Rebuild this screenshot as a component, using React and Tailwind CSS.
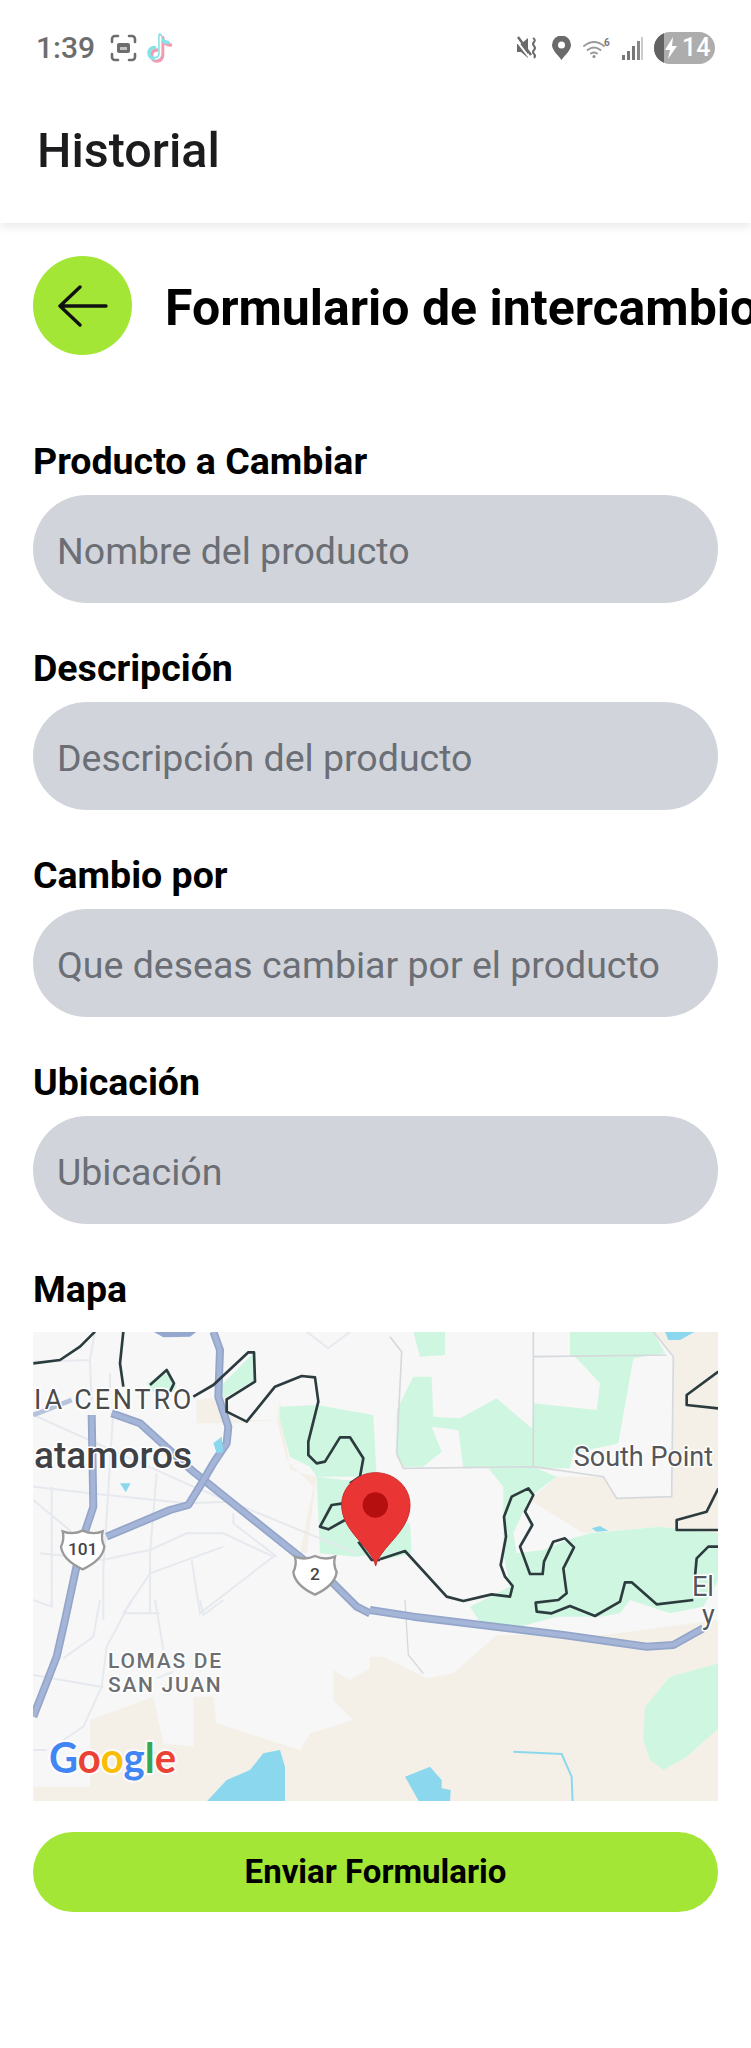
import React from "react";

const Z2 = "translate(0 1320) scale(0.33333)";
const Z3 = "translate(370 1320) scale(0.33333)";
const Z8 = "translate(0 1600) scale(0.33333)";
const Z9 = "translate(370 1600) scale(0.33333)";
const Z10 = "translate(300 1450) scale(0.33333)";

const LAND = "#f7f7f8", BEIGE = "#f4f0e8", GREEN = "#cff6e0", WATER = "#8bd8ee", MINOR = "#e6e9ee", GRAYR = "#d6d9dc", LINE = "#2c3c3e";

function Road({ d }) {
  return (
    <>
      <path d={d} fill="none" stroke="#93a5c8" strokeWidth="24" strokeLinejoin="round" />
      <path d={d} fill="none" stroke="#a4b5d8" strokeWidth="14" strokeLinejoin="round" />
    </>
  );
}

function Shield({ x, y, label, size = 42 }) {
  return (
    <g transform={`translate(${x} ${y})`}>
      <path d="M-60 -52 Q-30 -40 0 -54 Q30 -40 60 -52 Q54 -28 65 -6 Q60 34 0 62 Q-60 34 -65 -6 Q-54 -28 -60 -52Z" fill="#fff" stroke="#9a9a9a" strokeWidth="7" />
      <text x="0" y="18" textAnchor="middle" fontSize={size} fontFamily="Roboto, sans-serif" fontWeight="500" fill="#444">{label}</text>
    </g>
  );
}

function MapArt() {
  const halo = { paintOrder: "stroke", stroke: "#fff", strokeWidth: 3, strokeLinejoin: "round" };
  return (
    <svg viewBox="33 1332 685 469" className="block w-full h-full" style={{ fontFamily: "Roboto, sans-serif" }}>
      <rect x="33" y="1332" width="685" height="469" fill={LAND} />
      <g transform={Z8}>
        <path d="M270 360L460 290L490 430L580 440L580 290L640 290L650 370L900 450L930 400L1060 360L1000 300L1000 210L1050 240L1160 175L1160 610L100 610L100 560L270 560Z" fill={BEIGE} />
      </g>
      <g transform={Z9}>
        <path d="M0 170L40 170L170 235L250 220L380 105L700 105L1045 60L1045 610L0 610Z" fill={BEIGE} />
        <path d="M825 320L900 230L1045 190L1045 385L950 470L880 510L840 480L820 420Z" fill={GREEN} />
        <path d="M105 530L180 500L215 540L215 565L242 570L240 610L150 610Z" fill={WATER} />
        <path d="M430 455L575 462L605 530L608 610" fill="none" stroke={WATER} strokeWidth="6" />
      </g>
      <g transform={Z8}>
        <path d="M615 610L680 540L750 510L790 460L840 450L855 500L855 610Z" fill={WATER} />
      </g>
      <g transform={Z2}>
        <path d="M590 240L680 230L700 300L830 300L840 240L870 450L950 470L920 700L900 700L940 500L860 420L830 300L700 310L590 310Z" fill={BEIGE} />
        <path d="M440 190L500 160L530 200L520 215L460 215Z" fill={GREEN} />
        <path d="M660 200L760 100L765 180L670 235Z" fill={GREEN} />
        <path d="M840 260L950 255L1120 285L1130 470L1040 470L950 470L960 700L1070 710L1140 700L1140 480L1030 480L950 470L930 440L870 410L840 300Z" fill={GREEN} />
      </g>
      <g transform={Z3}>
        <path d="M850 35L1045 35L1045 640L870 620L640 640L480 540L560 470L700 470L740 535L905 530L910 110Z" fill={BEIGE} />
        <path d="M130 35L225 35L225 105L150 110Z" fill={GREEN} />
        <path d="M80 270L130 170L185 170L190 290L270 295L380 235L485 325L490 250L680 270L690 190L620 115L600 105L600 35L850 35L885 100L790 115L745 370L610 400L600 445L490 445L280 445L265 330L185 320L215 395L160 440L100 440L80 410Z" fill={GREEN} />
        <path d="M355 445L490 440L560 470L480 530L430 640L440 700L520 690L590 660L660 640L870 620L1045 640L1045 780L1000 860L900 880L780 840L750 880L690 890L560 890L450 920L340 920L300 860L420 800L400 700L400 500Z" fill={GREEN} />
        <path d="M-10 620L120 610L125 700L40 720L-10 700Z" fill={GREEN} />
        <path d="M885 35L975 35L930 60L895 60Z" fill={WATER} />
        <path d="M665 625L690 618L715 632L680 635Z" fill={WATER} />
        <path d="M60 50L95 95L80 400L100 445L490 440L700 470L740 535L905 530L910 110L850 35M490 35L490 440M490 110L890 105" fill="none" stroke={GRAYR} strokeWidth="5" />
      </g>
      <g transform={Z2} fill="none" stroke={MINOR} strokeWidth="6">
        <path d="M100 125L270 120L275 250M285 35L270 120M330 160L330 205M100 285L580 500L1070 700M100 540L220 640M100 500L270 520L560 550L690 545M155 500L155 860M470 460L450 700L450 880M340 270L310 750L310 900M120 700L310 720L400 700L450 690L560 640L670 640L820 710L600 880L575 720M450 760L670 680M450 760L370 880L480 880M700 580L700 610L830 710M920 35L985 85L1050 35" />
      </g>
      <g transform={Z8} fill="none" stroke={MINOR} strokeWidth="6">
        <path d="M155 0L155 20L100 0M300 0L280 110L190 175M395 0L320 140L305 260L250 380L190 420M385 40L470 40M465 0L490 150M100 225L310 262M100 450L140 450M600 0L610 45L670 0M470 235L520 215" />
      </g>
      <g transform={Z9} fill="none" stroke={GRAYR} strokeWidth="4">
        <path d="M105 0L115 165L160 220" />
      </g>
      <g transform={Z2}>
        <Road d="M275 285L280 560L250 650L225 760L195 900L170 1010L100 1190" />
        <Road d="M335 280L420 310L580 455L880 695L1000 790L1070 860L1110 880" />
        <Road d="M640 35L660 90L655 230L685 320L680 370L640 430L605 490L565 555L510 570L320 650" />
        <path d="M640 370L665 350L670 395L650 400Z" fill={WATER} />
        <path d="M460 35L590 35L570 50L490 52Z" fill="#93a7cf" />
        <path d="M100 285L215 240" stroke="#b6c3dd" strokeWidth="14" fill="none" />
        <path d="M360 490L392 490L377 517Z" fill={WATER} />
      </g>
      <g transform={Z9}>
        <Road d="M0 30L130 50L580 105L830 140L910 135L1000 85" />
      </g>
      <g transform={Z2} fill="none" stroke={LINE} strokeWidth="8" strokeLinejoin="round">
        <path d="M100 130L180 120L240 80L285 35" />
        <path d="M370 35L360 130L370 200" />
        <path d="M450 195L500 150L522 190L510 215" />
        <path d="M580 230L640 195L745 97L762 97L765 185L680 238L680 275L740 305L825 200L905 168L945 172L955 245L925 365L925 405L950 430L975 425L1020 352L1050 352L1090 415L1080 470L1050 490" />
      </g>
      <g transform={Z3} fill="none" stroke={LINE} strokeWidth="8" strokeLinejoin="round">
        <path d="M30 718L105 693L230 830L280 843L365 823L420 830L428 798L405 770L392 735L408 650L402 590L425 530L475 505L490 525L465 575L487 615L450 680L480 762L518 762L522 725L550 665L585 655L612 682L580 745L590 820L565 840L497 848L500 875L545 880L600 858L675 888L750 845L765 787L785 787L860 853L970 840" />
        <path d="M1045 155L950 225L950 255L1045 265" />
        <path d="M1045 505L1010 575L920 600L920 630L1045 630" />
        <path d="M1045 680L1015 680L980 715L975 770" />
      </g>
      <g transform={Z10} fill="none" stroke={LINE} strokeWidth="8" strokeLinejoin="round">
        <path d="M130 160L95 165L60 230L85 238L135 210" />
        <path d="M175 275L215 330L240 330" />
      </g>
      <text x="34" y="1409" fontSize="27" letterSpacing="2.8" fill="#4a4a4a" style={halo}>IA CENTRO</text>
      <text x="34" y="1468" fontSize="37" fontWeight="500" fill="#3f4145" style={halo}>atamoros</text>
      <text x="713" y="1466" fontSize="27" textAnchor="end" fill="#53565a" style={halo}>South Point</text>
      <text x="692" y="1596" fontSize="27" fill="#53565a" style={halo}>El</text>
      <text x="702" y="1624" fontSize="27" fill="#53565a" style={halo}>y</text>
      <text x="108" y="1668" fontSize="21" letterSpacing="1.7" fontWeight="500" fill="#6d6f73" style={halo}>LOMAS DE</text>
      <text x="108" y="1692" fontSize="21" letterSpacing="1.7" fontWeight="500" fill="#6d6f73" style={halo}>SAN JUAN</text>
      <g transform={Z2}>
        <Shield x={248} y={686} label="101" size={52} />
        <Shield x={945} y={762} label="2" size={52} />
      </g>
      <text x="49" y="1773" fontSize="42" fontWeight="700" fontFamily="Lato, sans-serif" textLength="127" lengthAdjust="spacingAndGlyphs" style={{ paintOrder: "stroke", stroke: "#ffffffcc", strokeWidth: 4, strokeLinejoin: "round" }}>
        <tspan fill="#4285f4">G</tspan><tspan fill="#ea4335">o</tspan><tspan fill="#fbbc05">o</tspan><tspan fill="#4285f4">g</tspan><tspan fill="#34a853">l</tspan><tspan fill="#ea4335">e</tspan>
      </text>
      <g transform={Z10}>
        <path d="M227 348C215 290 125 245 125 165C125 110 172 68 227 68C282 68 330 110 330 165C330 245 240 290 227 348Z" fill="#ea3535" stroke="#c92a2a" strokeWidth="3" />
        <circle cx="226" cy="165" r="38" fill="#b60f0f" />
      </g>
    </svg>
  );
}

function Field({ label, placeholder, first }) {
  return (
    <div className={first ? "mt-[84px]" : "mt-[43px]"}>
      <label className="block h-[44px] text-[37.5px] leading-[44px] font-bold text-black">{label}</label>
      <input
        readOnly
        placeholder={placeholder}
        className="mt-[12px] block w-full h-[108px] rounded-[54px] bg-[#d1d5db] px-[24px] pt-[3px] text-[37.5px] text-[#6b6e75] placeholder:text-[#6b6e75] outline-none"
      />
    </div>
  );
}

function StatusLeft() {
  return (
    <div className="flex items-center text-[#6d6d6d]">
      <span className="text-[30px] leading-[32px] font-medium w-[74px]">1:39</span>
      <svg width="27" height="28" viewBox="0 0 27 28" fill="none" stroke="currentColor" strokeWidth="2.6" strokeLinecap="round">
        <path d="M2 8V5a3 3 0 0 1 3-3h3M19 2h3a3 3 0 0 1 3 3v3M25 20v3a3 3 0 0 1-3 3h-3M8 26H5a3 3 0 0 1-3-3v-3" />
        <rect x="7" y="9" width="13" height="10" rx="2" fill="currentColor" stroke="none" />
        <rect x="10" y="13" width="7" height="3" fill="#fff" stroke="none" opacity="0.6" />
      </svg>
      <svg width="30" height="32" viewBox="0 0 30 32" fill="none" className="ml-[8px]" strokeWidth="3.6" strokeLinecap="round">
        <path d="M16 4v18a5.5 5.5 0 1 1-5.5-5.500M16 4c.5 4 3.500 7 8 7.500" stroke="#f49ab0" transform="translate(1.5 1.5)" />
        <path d="M16 4v18a5.5 5.5 0 1 1-5.500-5.500M16 4c.5 4 3.500 7 8 7.500" stroke="#84e3e6" transform="translate(-1 -1)" />
        <path d="M15.500 4.500v17.500a5 5 0 0 1-5 5" stroke="#fff" strokeWidth="1.6" />
      </svg>
    </div>
  );
}

function StatusRight() {
  return (
    <div className="flex items-center text-[#6a6a6a]">
      <svg width="22" height="24" viewBox="0 0 22 24" fill="currentColor">
        <path d="M1 8h4l7-6v20l-7-6H1Z" />
        <path d="M0 4l13 17" stroke="#fff" strokeWidth="2" />
        <path d="M2 1l13 18" stroke="currentColor" strokeWidth="2.400" />
        <path d="M17 2q3 2 1 4t0 4q2 2 0 4t0 4q2 2 0 4" fill="none" stroke="currentColor" strokeWidth="2" />
      </svg>
      <svg width="19" height="24" viewBox="0 0 19 24" className="ml-[14px]">
        <path fillRule="evenodd" d="M9.5 24C5 18 0 14 0 9a9.5 9.5 0 0 1 19 0c0 5-5 9-9.500 15ZM9.500 5.500a3.500 3.500 0 1 0 0 7a3.500 3.500 0 0 0 0-7Z" fill="currentColor" />
      </svg>
      <svg width="27" height="20" viewBox="0 0 27 20" fill="none" stroke="#9a9a9a" strokeWidth="2" strokeLinecap="round" className="ml-[12px]">
        <path d="M1 8q10-8 20 0M4.500 12q6.500-5 13 0M8 15.500q3-2 6 0" />
        <circle cx="11" cy="18.500" r="1.500" fill="#8a8a8a" stroke="none" />
        <text x="21" y="8" fontSize="10" fontWeight="700" fill="#777" stroke="none" fontFamily="Roboto, sans-serif">6</text>
      </svg>
      <svg width="21" height="23" viewBox="0 0 21 23" className="ml-[12px]">
        <rect x="0" y="18" width="3" height="5" fill="#777" />
        <rect x="5" y="14" width="3" height="9" fill="#777" />
        <rect x="10" y="9" width="3" height="14" fill="#777" />
        <rect x="15" y="4" width="3" height="19" fill="#888" />
        <rect x="19" y="0" width="2" height="23" fill="#ccc" />
      </svg>
      <div className="ml-[11px] h-[32px] w-[61px] rounded-[16px] bg-[#adadad] overflow-hidden flex items-center">
        <span className="h-full w-[10px] bg-[#626262]" />
        <svg width="13" height="22" viewBox="0 0 13 22" className="ml-[1px]"><path d="M8 0L0 13h5l-2 9 9-13H7Z" fill="#fff" /></svg>
        <span className="ml-[4px] text-[25px] leading-[32px] font-medium text-white">14</span>
      </div>
    </div>
  );
}

export default function App() {
  return (
    <div className="w-[751px] h-[2048px] bg-white overflow-hidden font-['Roboto',sans-serif]">
      <header className="h-[223px] bg-white shadow-[0_3px_10px_rgba(0,0,0,0.10)] relative">
        <div className="flex items-center justify-between pl-[36px] pr-[36px] pt-[32px] h-[64px]">
          <StatusLeft />
          <StatusRight />
        </div>
        <h1 className="pl-[37px] mt-[59px] text-[48.5px] leading-[56px] font-medium text-[#1c1c1e]">Historial</h1>
      </header>
      <main className="px-[33px] pt-[33px]">
        <div className="flex items-center gap-[33px] w-[718px] whitespace-nowrap">
          <button className="w-[99px] h-[99px] shrink-0 rounded-full bg-[#a3e635] flex items-center justify-center">
            <svg width="50" height="42" viewBox="0 0 50 42" fill="none" stroke="#111" strokeWidth="3.4" strokeLinecap="round" strokeLinejoin="round">
              <path d="M48 21H2M22 2L2 21L22 40" />
            </svg>
          </button>
          <h2 className="mt-[4px] text-[50px] leading-[60px] font-bold text-black">Formulario de intercambio</h2>
        </div>
        <Field first label="Producto a Cambiar" placeholder="Nombre del producto" />
        <Field label="Descripción" placeholder="Descripción del producto" />
        <Field label="Cambio por" placeholder="Que deseas cambiar por el producto" />
        <Field label="Ubicación" placeholder="Ubicación" />
        <div className="mt-[43px]">
          <div className="h-[44px] text-[37.5px] leading-[44px] font-bold text-black">Mapa</div>
          <div className="mt-[21px] h-[469px] overflow-hidden">
            <MapArt />
          </div>
        </div>
        <button className="mt-[31px] w-full h-[80px] rounded-[40px] bg-[#a3e635] text-[33px] font-bold text-black">Enviar Formulario</button>
      </main>
    </div>
  );
}
